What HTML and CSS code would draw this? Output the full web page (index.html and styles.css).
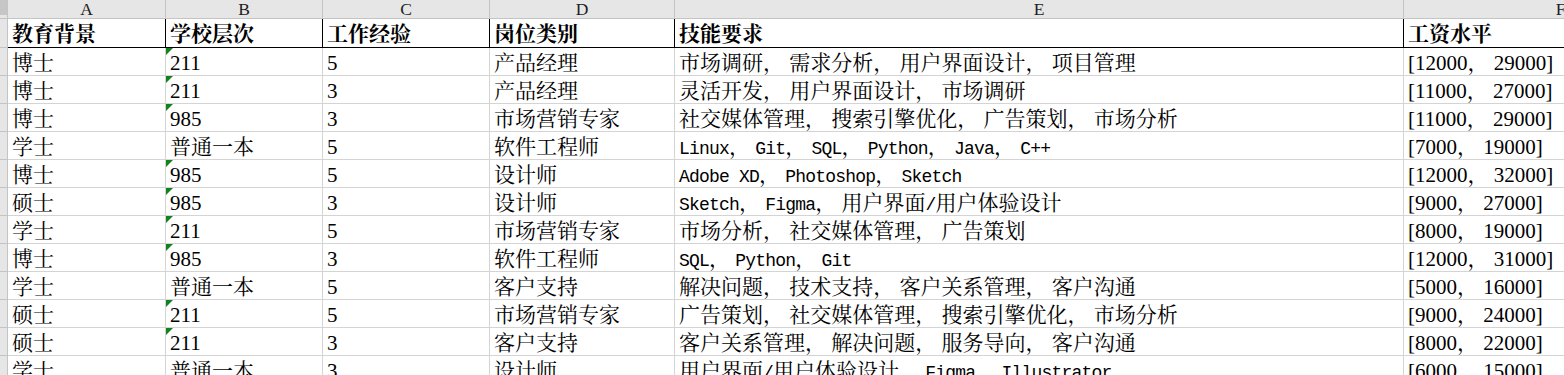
FILE: index.html
```html
<!DOCTYPE html>
<html lang="zh-CN">
<head>
<meta charset="utf-8">
<title>Sheet</title>
<link rel="stylesheet" href="styles.css">
</head>
<body>
<div class="sheet">
  <div class="row colhead">
    <div class="corner"><div class="corner-fill"></div></div>
    <div class="letter">A</div>
    <div class="letter">B</div>
    <div class="letter">C</div>
    <div class="letter">D</div>
    <div class="letter">E</div>
    <div class="letter">F</div>
  </div>
  <div class="row head">
    <div class="rh"></div>
    <div class="cell">教育背景</div>
    <div class="cell">学校层次</div>
    <div class="cell">工作经验</div>
    <div class="cell">岗位类别</div>
    <div class="cell">技能要求</div>
    <div class="cell">工资水平</div>
  </div>
  <div class="row data">
    <div class="rh"></div>
    <div class="cell">博士</div>
    <div class="cell txtnum">211</div>
    <div class="cell">5</div>
    <div class="cell">产品经理</div>
    <div class="cell">市场调研， 需求分析， 用户界面设计， 项目管理</div>
    <div class="cell">[12000， 29000]</div>
  </div>
  <div class="row data">
    <div class="rh"></div>
    <div class="cell">博士</div>
    <div class="cell txtnum">211</div>
    <div class="cell">3</div>
    <div class="cell">产品经理</div>
    <div class="cell">灵活开发， 用户界面设计， 市场调研</div>
    <div class="cell">[11000， 27000]</div>
  </div>
  <div class="row data">
    <div class="rh"></div>
    <div class="cell">博士</div>
    <div class="cell txtnum">985</div>
    <div class="cell">3</div>
    <div class="cell">市场营销专家</div>
    <div class="cell">社交媒体管理， 搜索引擎优化， 广告策划， 市场分析</div>
    <div class="cell">[11000， 29000]</div>
  </div>
  <div class="row data">
    <div class="rh"></div>
    <div class="cell">学士</div>
    <div class="cell">普通一本</div>
    <div class="cell">5</div>
    <div class="cell">软件工程师</div>
    <div class="cell"><span class="lat">Linux</span>， <span class="lat">Git</span>， <span class="lat">SQL</span>， <span class="lat">Python</span>， <span class="lat">Java</span>， <span class="lat">C++</span></div>
    <div class="cell">[7000， 19000]</div>
  </div>
  <div class="row data">
    <div class="rh"></div>
    <div class="cell">博士</div>
    <div class="cell txtnum">985</div>
    <div class="cell">5</div>
    <div class="cell">设计师</div>
    <div class="cell"><span class="lat">Adobe XD</span>， <span class="lat">Photoshop</span>， <span class="lat">Sketch</span></div>
    <div class="cell">[12000， 32000]</div>
  </div>
  <div class="row data">
    <div class="rh"></div>
    <div class="cell">硕士</div>
    <div class="cell txtnum">985</div>
    <div class="cell">3</div>
    <div class="cell">设计师</div>
    <div class="cell"><span class="lat">Sketch</span>， <span class="lat">Figma</span>， 用户界面<span class="lat">/</span>用户体验设计</div>
    <div class="cell">[9000， 27000]</div>
  </div>
  <div class="row data">
    <div class="rh"></div>
    <div class="cell">学士</div>
    <div class="cell txtnum">211</div>
    <div class="cell">5</div>
    <div class="cell">市场营销专家</div>
    <div class="cell">市场分析， 社交媒体管理， 广告策划</div>
    <div class="cell">[8000， 19000]</div>
  </div>
  <div class="row data">
    <div class="rh"></div>
    <div class="cell">博士</div>
    <div class="cell txtnum">985</div>
    <div class="cell">3</div>
    <div class="cell">软件工程师</div>
    <div class="cell"><span class="lat">SQL</span>， <span class="lat">Python</span>， <span class="lat">Git</span></div>
    <div class="cell">[12000， 31000]</div>
  </div>
  <div class="row data">
    <div class="rh"></div>
    <div class="cell">学士</div>
    <div class="cell">普通一本</div>
    <div class="cell">5</div>
    <div class="cell">客户支持</div>
    <div class="cell">解决问题， 技术支持， 客户关系管理， 客户沟通</div>
    <div class="cell">[5000， 16000]</div>
  </div>
  <div class="row data">
    <div class="rh"></div>
    <div class="cell">硕士</div>
    <div class="cell txtnum">211</div>
    <div class="cell">5</div>
    <div class="cell">市场营销专家</div>
    <div class="cell">广告策划， 社交媒体管理， 搜索引擎优化， 市场分析</div>
    <div class="cell">[9000， 24000]</div>
  </div>
  <div class="row data">
    <div class="rh"></div>
    <div class="cell">硕士</div>
    <div class="cell txtnum">211</div>
    <div class="cell">3</div>
    <div class="cell">客户支持</div>
    <div class="cell">客户关系管理， 解决问题， 服务导向， 客户沟通</div>
    <div class="cell">[8000， 22000]</div>
  </div>
  <div class="row data">
    <div class="rh"></div>
    <div class="cell">学士</div>
    <div class="cell">普通一本</div>
    <div class="cell">3</div>
    <div class="cell">设计师</div>
    <div class="cell">用户界面<span class="lat">/</span>用户体验设计， <span class="lat">Figma</span>， <span class="lat">Illustrator</span></div>
    <div class="cell">[6000， 15000]</div>
  </div>
</div>
</body>
</html>
```

FILE: styles.css
```css
html, body {
  margin: 0;
  padding: 0;
  background: #ffffff;
  overflow: hidden;
}

.sheet {
  width: 1564px;
  height: 375px;
  overflow: hidden;
}

.row {
  display: grid;
  grid-template-columns: 8px 158px 157px 167px 185px 729px 314px;
}

.row > div {
  box-sizing: border-box;
  border-right: 1px solid #d4d4d4;
  border-bottom: 1px solid #d4d4d4;
  overflow: hidden;
  white-space: nowrap;
}

/* column letters */
.colhead {
  height: 19px;
}

.colhead > div {
  background: #e6e6e6;
  border-right-color: #c4c4c4;
  border-bottom-color: #c4c4c4;
}

.corner-fill {
  height: 15px;
  width: 7px;
  background: #c6c6c6;
}

.letter {
  font-family: "Liberation Serif", serif;
  font-size: 17.5px;
  line-height: 18px;
  color: #1e1e1e;
  text-align: center;
}

/* row headers */
.rh {
  background: #e6e6e6;
}

.row > .rh {
  border-right-color: #c4c4c4;
  border-bottom-color: #c4c4c4;
}

/* cells */
.cell {
  position: relative;
  font-family: "Liberation Serif", "Noto Serif CJK SC", "Noto Sans CJK SC", serif;
  font-size: 21px;
  color: #000000;
  padding-left: 4px;
  padding-top: 2px;
  line-height: 26px;
}

.head {
  height: 29px;
}

.head .cell {
  font-weight: bold;
  border-right-color: #000000;
  border-bottom-color: #000000;
}

.data {
  height: 28px;
}

.lat {
  font-family: "Liberation Mono", monospace;
  font-size: 18px;
  letter-spacing: -0.8px;
}

/* number stored as text indicator */
.txtnum::before {
  content: "";
  position: absolute;
  top: 0;
  left: 0;
  width: 0;
  height: 0;
  border-top: 7px solid #12821a;
  border-right: 7px solid transparent;
}
```
